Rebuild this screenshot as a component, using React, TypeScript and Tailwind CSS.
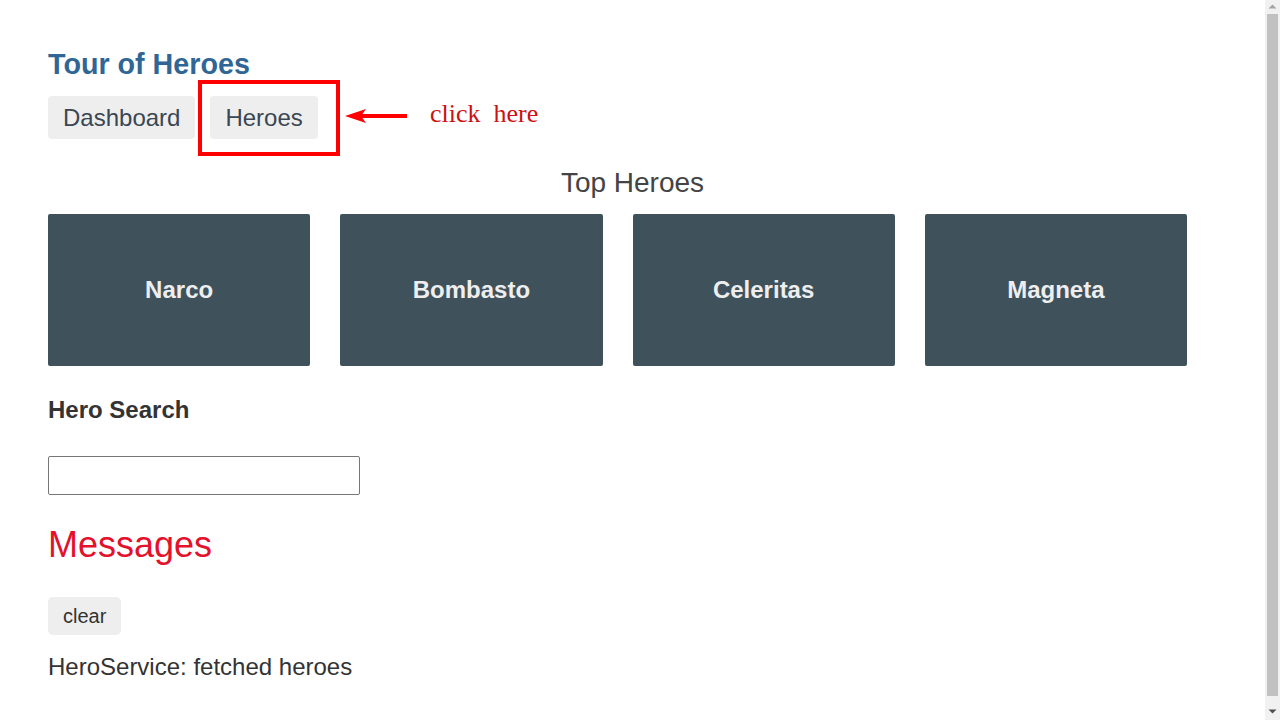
const heroes = ['Narco', 'Bombasto', 'Celeritas', 'Magneta'];

const NavLink = ({ label }: { label: string }) => (
  <a className="inline-block bg-[#eeeeee] text-[#3a4752] rounded-[4px] px-[15px] py-2 text-[24px] leading-[27px] cursor-pointer">
    {label}
  </a>
);

// imitation of the browser's vertical scrollbar in the screenshot
const ScrollBar = () => (
  <div className="w-[15px] shrink-0 h-[720px] bg-[#f1f1f1] flex flex-col items-center">
    <svg width="15" height="14" viewBox="0 0 15 14">
      <polygon points="3.5,8.5 7.5,4.5 11.5,8.5" fill="#a3a3a3" />
    </svg>
    <div className="w-[11px] h-[682px] bg-[#c1c1c1]" />
    <svg width="15" height="24" viewBox="0 0 15 24">
      <polygon points="3.5,13.5 11.5,13.5 7.5,17.5" fill="#505050" />
    </svg>
  </div>
);

export default function App() {
  return (
    <div className="flex h-[720px] overflow-hidden bg-white">
      <div className="relative w-[1265px] shrink-0 text-[#333333] font-['Liberation_Sans',Arial,sans-serif]">
        <div className="px-[48px] pt-[48px] pb-[49px] flex flex-col">
          <h1 className="text-[28.7px] leading-[32px] font-bold text-[#2f6696]">Tour of Heroes</h1>

          <nav className="mt-[16px] flex gap-[15px]">
            <NavLink label="Dashboard" />
            <NavLink label="Heroes" />
          </nav>

          <h2 className="mt-[28px] text-center text-[28px] leading-[31px] font-light text-[#444444]">Top Heroes</h2>

          <div className="mt-[16px] grid grid-cols-4 gap-[30px] pr-[30px]">
            {heroes.map((h) => (
              <div
                key={h}
                className="h-[152px] rounded-[2px] bg-[#3f525c] flex items-center justify-center text-[#eeeeee] text-[24px] font-bold"
              >
                {h}
              </div>
            ))}
          </div>

          <h4 className="mt-[30px] text-[24px] leading-[28px] font-bold text-[#333333]">Hero Search</h4>

          <input
            type="text"
            className="mt-[32px] w-[312px] h-[39px] border border-[#767676] rounded-[2px] px-2 text-[20px] outline-none"
          />

          <h2 className="mt-[29px] text-[36px] leading-[41px] text-[#e4102c]">Messages</h2>

          <div className="mt-[32px]">
            <button className="h-[38px] px-[15px] bg-[#eeeeee] rounded-[5px] text-[20px] leading-[23px] text-[#333333]">
              clear
            </button>
          </div>

          <div className="mt-[18px] text-[24px] leading-[27px] text-[#333333]">HeroService: fetched heroes</div>
        </div>

        {/* annotation overlay */}
        <div className="absolute left-[198px] top-[80px] w-[142px] h-[76px] border-[4px] border-[#ff0000]" />
        <svg className="absolute left-[344px] top-[106px]" width="66" height="20" viewBox="0 0 66 20">
          <line x1="12" y1="10" x2="63" y2="10" stroke="#ff0000" strokeWidth="4" />
          <polygon points="1,10 22,3 17,10 22,17" fill="#ff0000" />
        </svg>
        <div className="absolute left-[430px] top-[99px] whitespace-pre text-[26px] leading-[30px] text-[#cc1111] font-['Liberation_Serif','Times_New_Roman',serif]">
          click  here
        </div>
      </div>
      <ScrollBar />
    </div>
  );
}
